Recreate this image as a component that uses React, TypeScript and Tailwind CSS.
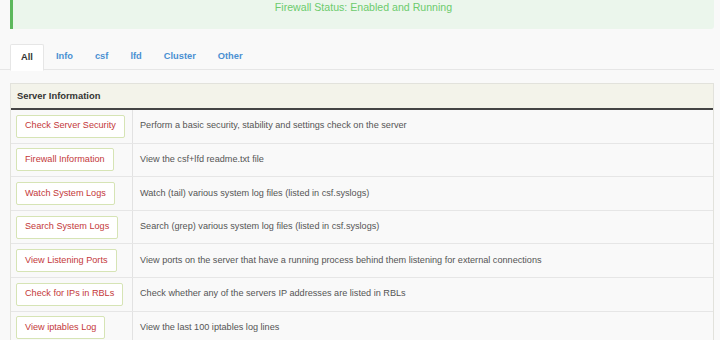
const rows: [string, string][] = [
  ["Check Server Security", "Perform a basic security, stability and settings check on the server"],
  ["Firewall Information", "View the csf+lfd readme.txt file"],
  ["Watch System Logs", "Watch (tail) various system log files (listed in csf.syslogs)"],
  ["Search System Logs", "Search (grep) various system log files (listed in csf.syslogs)"],
  ["View Listening Ports", "View ports on the server that have a running process behind them listening for external connections"],
  ["Check for IPs in RBLs", "Check whether any of the servers IP addresses are listed in RBLs"],
  ["View iptables Log", "View the last 100 iptables log lines"],
];

const tabs = ["All", "Info", "csf", "lfd", "Cluster", "Other"];

export default function App() {
  return (
    <div className="w-[720px] h-[340px] overflow-hidden bg-[#f9f9f9] font-['Liberation_Sans',Arial,sans-serif] pl-[10px] pr-[6px]">
      {/* status alert */}
      <div className="-mt-[12px] h-[41px] bg-[#ebf6ec] border-l-[3px] border-[#5cb85c] rounded-r-[3px] flex items-end justify-center pb-[16px]">
        <span className="text-[#6ccb6c] text-[10.6px] leading-none">Firewall Status: Enabled and Running</span>
      </div>

      {/* tabs */}
      <div className="mt-[15px] -ml-[10px] pl-[10px] h-[26px] flex border-b border-[#e6e6e6]">
        {tabs.map((t, i) => (
          <div
            key={t}
            className={
              i === 0
                ? "px-[10px] mr-[2px] h-[27px] flex items-center bg-white border border-[#e6e6e6] border-b-white rounded-t-[2px] text-[9.3px] font-bold text-[#333]"
                : "px-[10px] mr-[2px] h-[26px] flex items-center text-[9.3px] font-bold text-[#4a90d2]"
            }
          >
            {t}
          </div>
        ))}
      </div>

      {/* table */}
      <div className="mt-[13px] border border-[#e2e2dc] border-b-0">
        <div className="h-[26px] bg-[#f3f3ea] flex items-center pl-[6px] text-[9.4px] font-bold text-[#333] border-b-2 border-[#444]">
          Server Information
        </div>
        {rows.map(([btn, desc]) => (
          <div key={btn} className="h-[33.6px] flex border-b border-[#e6e6e6] bg-[#f9f9f9]">
            <div className="w-[122px] shrink-0 border-r border-[#e2e2e2] flex items-center pl-[5px]">
              <div className="h-[23px] px-[8px] flex items-center bg-white border border-[#d6e4b5] rounded-[2px] text-[#c4383a] text-[9.15px] whitespace-nowrap">
                {btn}
              </div>
            </div>
            <div className="flex items-center pl-[7px] text-[9.15px] text-[#555] whitespace-nowrap">{desc}</div>
          </div>
        ))}
      </div>
    </div>
  );
}
